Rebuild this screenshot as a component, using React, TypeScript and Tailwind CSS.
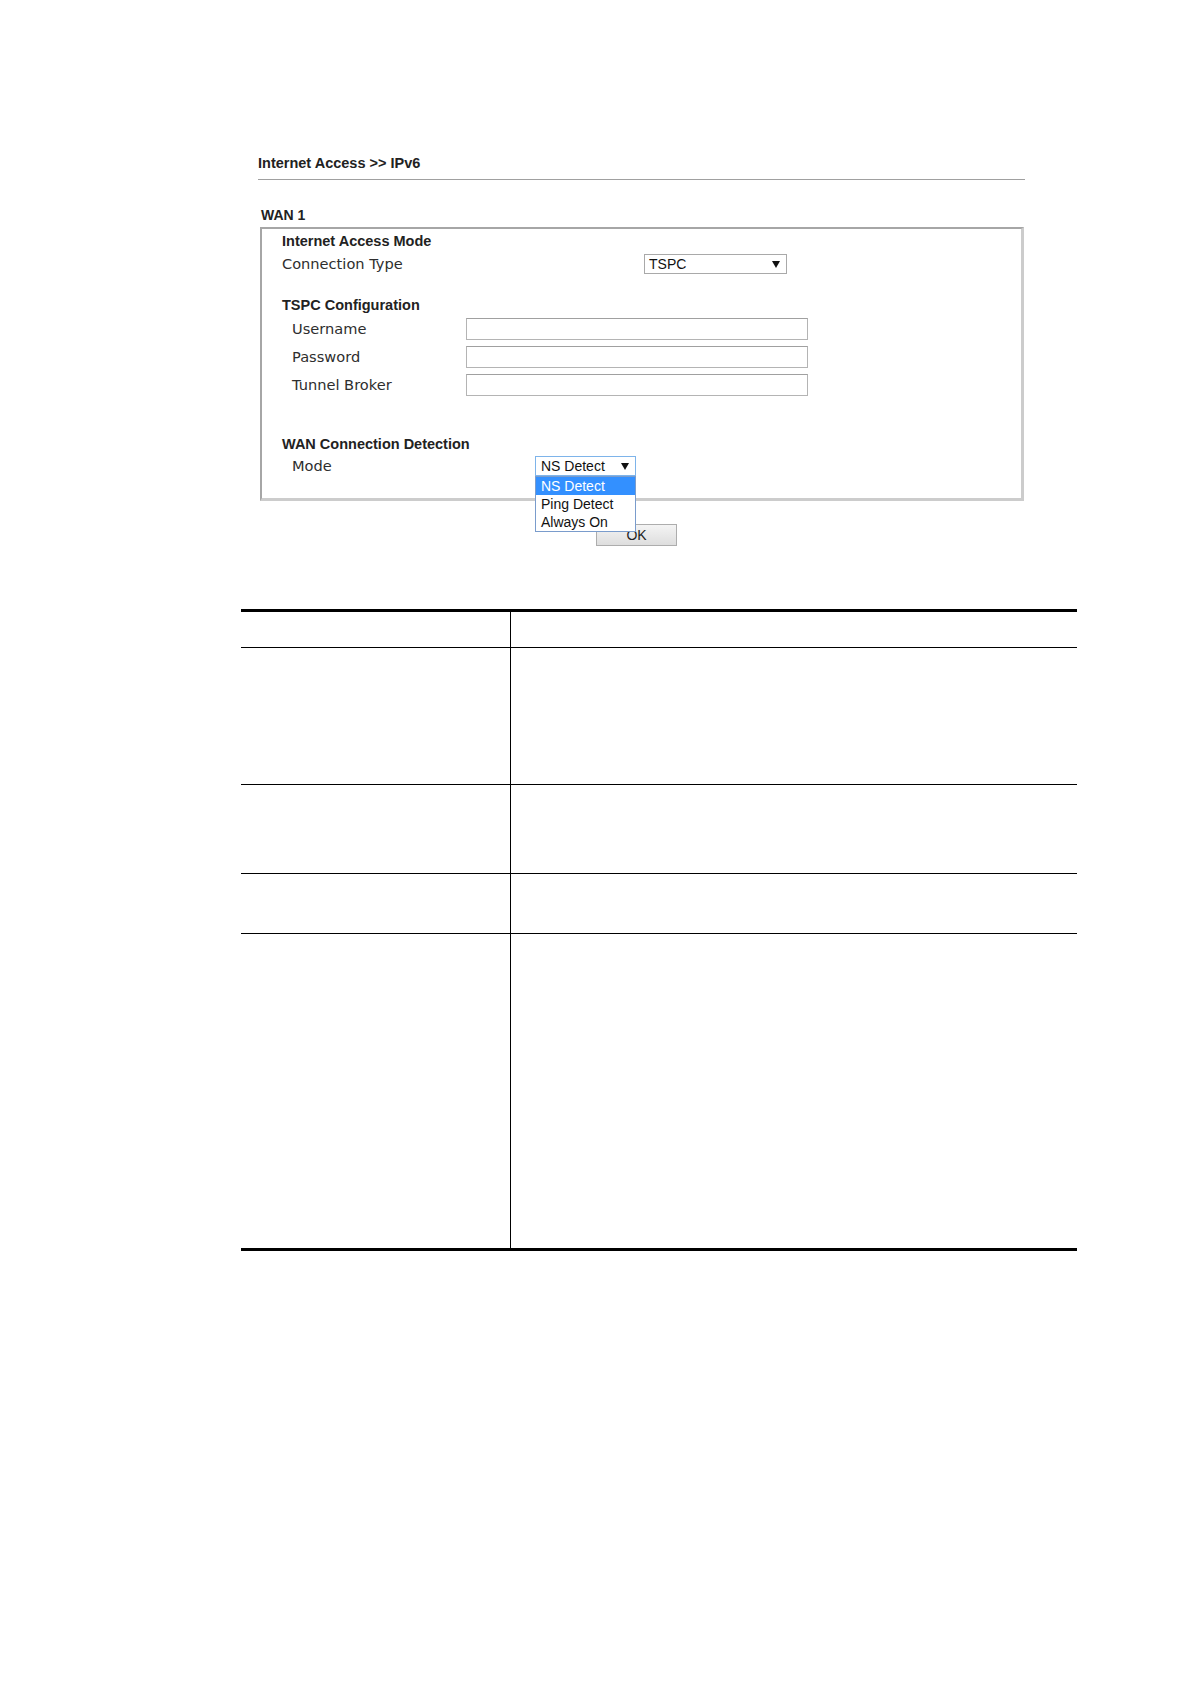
import React from 'react';

const bold = "font-['Liberation_Sans',Arial,sans-serif] font-bold text-[14.5px] leading-[16px] text-[#222]";
const label = "font-['DejaVu_Sans',Verdana,sans-serif] text-[14.6px] leading-[16px] text-[#2e2e2e]";
const ctrl = "font-['Liberation_Sans',Arial,sans-serif] text-[14px] leading-[18px] text-[#111]";

const Arrow = () => (
  <svg width="8" height="7" viewBox="0 0 8 7" className="shrink-0">
    <path d="M0 0 H8 L4 7 Z" fill="#111" />
  </svg>
);

const TextBox = () => (
  <div className="h-[22px] w-[342px] border border-[#b4b4b4] border-t-[#a0a0a0] bg-white" />
);

// row heights incl. bottom rule
const Rows = [36, 137, 89, 60, 314];

export default function App() {
  return (
    <div className="w-[1190px] min-h-[1684px] bg-white pt-[155px]">
      {/* screenshot of the router page */}
      <div className="ml-[258px] w-[767px]">
        <div className={bold}>Internet Access &gt;&gt; IPv6</div>
        <div className="mt-[8px] h-px bg-[#a0a0a0]" />

        <div className={`${bold} text-[14px] mt-[27px] pl-[3px]`}>WAN 1</div>

        <div className="mt-[4px] ml-[2px] w-[764px] border-t-2 border-l-2 border-r-[3px] border-b-[3px] border-t-[#a6a6a6] border-l-[#a6a6a6] border-r-[#cccccc] border-b-[#cccccc] pl-[20px] pt-[4px] pb-[22px]">
          <div className={bold}>Internet Access Mode</div>
          <div className="mt-[5px] flex h-[20px] items-center">
            <div className={`${label} w-[362px]`}>Connection Type</div>
            <div className="flex h-[20px] w-[143px] items-center justify-between border border-[#a9a9a9] bg-white pl-[4px] pr-[6px]">
              <span className={ctrl}>TSPC</span>
              <Arrow />
            </div>
          </div>

          <div className={`${bold} mt-[23px]`}>TSPC Configuration</div>
          <div className="mt-[5px] flex flex-col gap-[6px] pl-[10px]">
            {['Username', 'Password', 'Tunnel Broker'].map(t => (
              <div key={t} className="flex h-[22px] items-center">
                <div className={`${label} w-[174px]`}>{t}</div>
                <TextBox />
              </div>
            ))}
          </div>

          <div className={`${bold} mt-[40px]`}>WAN Connection Detection</div>
          <div className="mt-[4px] flex h-[20px] items-center pl-[10px]">
            <div className={`${label} w-[243px]`}>Mode</div>
            <div className="relative">
              <div className="flex h-[20px] w-[101px] items-center justify-between border border-[#7eb4ea] bg-white pl-[5px] pr-[6px]">
                <span className={ctrl}>NS Detect</span>
                <Arrow />
              </div>
              <div className="absolute left-0 top-full z-10 w-[101px] border border-[#7a9ccc] bg-white">
                <div className={`${ctrl} bg-[#3390ff] pl-[5px] text-white`}>NS Detect</div>
                <div className={`${ctrl} pl-[5px]`}>Ping Detect</div>
                <div className={`${ctrl} pl-[5px] leading-[17px]`}>Always On</div>
              </div>
            </div>
          </div>
        </div>

        <button className="mt-[23px] ml-[338px] flex h-[22px] w-[81px] items-center justify-center border border-[#adadad] bg-gradient-to-b from-[#f4f4f4] to-[#dedede] font-['Liberation_Sans',Arial,sans-serif] text-[14px] text-[#222]">
          OK
        </button>
      </div>

      {/* parameter table */}
      <div className="mt-[63px] ml-[241px] w-[836px] border-t-[3px] border-b-[3px] border-black">
        {Rows.map((h, i) => (
          <div
            key={i}
            className={`flex ${i < Rows.length - 1 ? 'border-b border-black' : ''}`}
            style={{ height: h }}
          >
            <div className="w-[270px] border-r border-black" />
            <div className="flex-1" />
          </div>
        ))}
      </div>
    </div>
  );
}
